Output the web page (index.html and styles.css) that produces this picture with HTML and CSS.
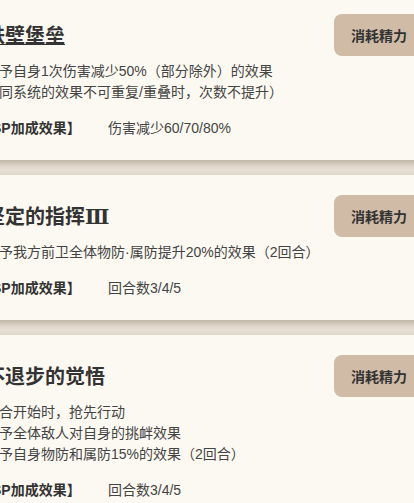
FILE: index.html
```html
<!DOCTYPE html>
<html lang="zh-CN">

<head>
  <meta charset="UTF-8">
  <meta name="viewport" content="width=device-width, initial-scale=1.0">
  <title>技能列表</title>
  <link rel="stylesheet" href="styles.css">
</head>

<body>
  <div class="skill-list">
    <div class="skill-card">
      <div class="skill-head">
        <h2 class="skill-name"><a href="#">铁壁堡垒</a></h2>
        <button class="cost-btn">消耗精力</button>
      </div>
      <div class="skill-desc">
        <p>给予自身1次伤害减少50%（部分除外）的效果</p>
        <p>（同系统的效果不可重复/重叠时，次数不提升）</p>
      </div>
      <div class="sp-row">
        <span class="sp-label">【SP加成效果】</span>
        <span class="sp-value">伤害减少60/70/80%</span>
      </div>
    </div>

    <div class="skill-card">
      <div class="skill-head">
        <h2 class="skill-name">坚定的指挥<span class="roman">Ⅲ</span></h2>
        <button class="cost-btn">消耗精力</button>
      </div>
      <div class="skill-desc">
        <p>给予我方前卫全体物防·属防提升20%的效果（2回合）</p>
      </div>
      <div class="sp-row">
        <span class="sp-label">【SP加成效果】</span>
        <span class="sp-value">回合数3/4/5</span>
      </div>
    </div>

    <div class="skill-card">
      <div class="skill-head">
        <h2 class="skill-name">不退步的觉悟</h2>
        <button class="cost-btn">消耗精力</button>
      </div>
      <div class="skill-desc">
        <p>回合开始时，抢先行动</p>
        <p>给予全体敌人对自身的挑衅效果</p>
        <p>给予自身物防和属防15%的效果（2回合）</p>
      </div>
      <div class="sp-row">
        <span class="sp-label">【SP加成效果】</span>
        <span class="sp-value">回合数3/4/5</span>
      </div>
    </div>
  </div>
</body>

</html>
```

FILE: styles.css
```css
html,
body {
  overflow: hidden;
}

body {
  margin: 0;
  padding: 0;
  background-color: #e6ded2;
  font-family: 'Liberation Sans', 'Noto Sans CJK SC', sans-serif;
  color: #444;
}

.skill-list {
  margin: -6px -30px 0 -35px;
  display: flex;
  flex-direction: column;
  gap: 15px;
}

.skill-card {
  background-color: #fcf9f2;
  padding: 20px 20px 21px;
  box-shadow: 0 3px 6px rgba(70, 50, 30, 0.28);
}

.skill-head {
  display: flex;
  align-items: center;
  justify-content: space-between;
  margin-bottom: 5px;
}

.skill-name {
  margin: 0;
  font-family: 'Noto Sans CJK SC', sans-serif;
  font-size: 20px;
  line-height: 28px;
  font-weight: bold;
  color: #333;
}

.skill-name a {
  color: #333;
  text-decoration: underline;
  text-decoration-thickness: 1px;
}

.roman {
  font-family: 'DejaVu Serif', serif;
}

.cost-btn {
  height: 42px;
  padding: 0 17px;
  border: none;
  border-radius: 8px;
  background-color: #d0bba7;
  color: #333;
  font-family: inherit;
  font-size: 14px;
  font-weight: bold;
  cursor: pointer;
}

.skill-desc p {
  margin: 0;
  font-size: 14px;
  line-height: 21px;
}

.sp-row {
  display: flex;
  margin: 15px 0 0 -7px;
  font-size: 14px;
  line-height: 21px;
}

.sp-label {
  width: 130px;
  font-weight: bold;
  color: #333;
}
```
